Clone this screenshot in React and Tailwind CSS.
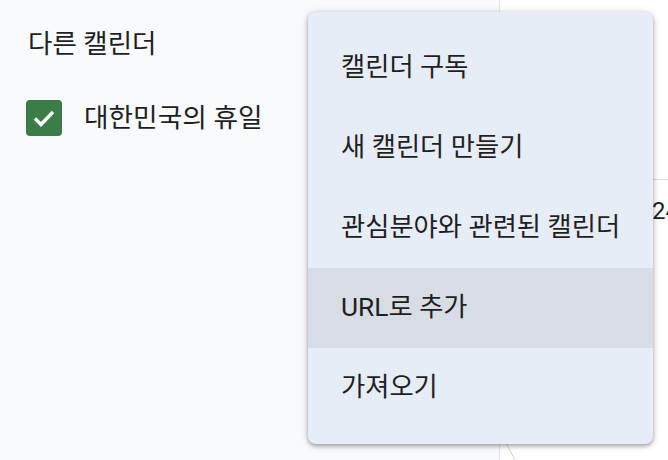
import React from 'react';

const menuItems = ['캘린더 구독', '새 캘린더 만들기', '관심분야와 관련된 캘린더', 'URL로 추가', '가져오기'];

const font = { fontFamily: "Roboto, 'Noto Sans CJK KR', sans-serif" };

export default function App() {
  return (
    <div className="relative flex h-[460px] w-[668px] overflow-hidden text-[#1f1f1f]" style={font}>
      {/* 사이드바 */}
      <div className="w-[500px] shrink-0 border-r border-[#e1e4ea] bg-[#f8fafd] pl-[26px] pt-[26px]">
        <h3 className="pl-[2px] text-[26.5px] leading-[36px]">다른 캘린더</h3>
        <label className="mt-[38px] flex items-center gap-[22px]">
          <span className="flex h-[36px] w-[36px] items-center justify-center rounded-[4px] bg-[#3a7d48]">
            <svg width="28" height="28" viewBox="0 0 28 28" fill="none">
              <path d="M5 14.5l6 6L23 8" stroke="white" strokeWidth="3.4" />
            </svg>
          </span>
          <span className="text-[26.7px] leading-[36px]">대한민국의 휴일</span>
        </label>
      </div>

      {/* 캘린더 영역 */}
      <div className="relative flex-1 bg-white">
        <div className="mt-[179px] border-t border-[#dadce0]" />
        <div className="absolute left-[152px] top-[196px] text-[24px] leading-[30px]">24</div>
        <svg className="absolute left-0 top-[430px]" width="40" height="30" viewBox="0 0 40 30" fill="none">
          <path d="M0 0 Q8 18 16 32" stroke="#d0d3d8" strokeWidth="1" />
        </svg>
      </div>

      {/* 메뉴 */}
      <div className="absolute left-[308px] top-[12px] w-[345px] rounded-[8px] bg-[#e7edf7] py-[16px] shadow-[0_2px_4px_rgba(0,0,0,0.3),0_1px_8px_rgba(0,0,0,0.15)]">
        {menuItems.map((item, i) => (
          <div
            key={i}
            className={`flex h-[80px] items-center pl-[33px] text-[26.3px] ${i === 3 ? 'bg-[#d8dce5]' : ''}`}
          >
            {item}
          </div>
        ))}
      </div>
    </div>
  );
}
